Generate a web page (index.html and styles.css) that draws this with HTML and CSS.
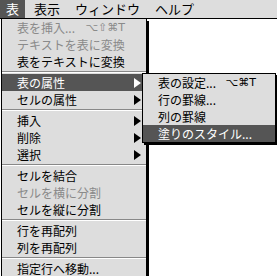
FILE: index.html
```html
<!DOCTYPE html>
<html lang="ja">
<head>
<meta charset="utf-8">
<link rel="stylesheet" href="styles.css">
</head>
<body>
<div class="menubar">
  <span class="title active">表</span>
  <span class="title">表示</span>
  <span class="title">ウィンドウ</span>
  <span class="title">ヘルプ</span>
</div>
<div class="menu main">
  <div class="item disabled"><span class="label">表を挿入...</span><span class="key">⌥⇧⌘T</span></div>
  <div class="item disabled"><span class="label">テキストを表に変換</span></div>
  <div class="item"><span class="label">表をテキストに変換</span></div>
  <div class="sep"></div>
  <div class="item selected has-sub"><span class="label">表の属性</span><svg class="arrow" width="7" height="10" viewBox="0 0 7 10"><polygon points="0,0 7,5 0,10"/></svg>
    <div class="menu sub">
      <div class="item"><span class="label">表の設定...</span><span class="key">⌥⌘T</span></div>
      <div class="item"><span class="label">行の罫線...</span></div>
      <div class="item"><span class="label">列の罫線</span></div>
      <div class="item selected"><span class="label">塗りのスタイル...</span></div>
    </div>
  </div>
  <div class="item"><span class="label">セルの属性</span><svg class="arrow" width="7" height="10" viewBox="0 0 7 10"><polygon points="0,0 7,5 0,10"/></svg></div>
  <div class="sep"></div>
  <div class="item"><span class="label">挿入</span><svg class="arrow" width="7" height="10" viewBox="0 0 7 10"><polygon points="0,0 7,5 0,10"/></svg></div>
  <div class="item"><span class="label">削除</span><svg class="arrow" width="7" height="10" viewBox="0 0 7 10"><polygon points="0,0 7,5 0,10"/></svg></div>
  <div class="item"><span class="label">選択</span><svg class="arrow" width="7" height="10" viewBox="0 0 7 10"><polygon points="0,0 7,5 0,10"/></svg></div>
  <div class="sep"></div>
  <div class="item"><span class="label">セルを結合</span></div>
  <div class="item disabled"><span class="label">セルを横に分割</span></div>
  <div class="item"><span class="label">セルを縦に分割</span></div>
  <div class="sep"></div>
  <div class="item"><span class="label">行を再配列</span></div>
  <div class="item"><span class="label">列を再配列</span></div>
  <div class="sep"></div>
  <div class="item"><span class="label">指定行へ移動...</span></div>
</div>
</body>
</html>
```

FILE: styles.css
```css
html, body {
  margin: 0;
  padding: 0;
  background: #fff;
  width: 277px;
  height: 276px;
  overflow: hidden;
  font-family: "Noto Sans CJK JP", "DejaVu Sans", sans-serif;
  font-size: 12px;
  color: #000;
}

.menubar {
  display: flex;
  height: 18px;
  background: #dddddd;
  border-bottom: 1px solid #000;
  align-items: stretch;
}

.title {
  display: flex;
  align-items: center;
  padding: 0 6px;
  line-height: 18px;
  font-size: 13px;
  margin-right: 3px;
}

.title.active {
  background: #555555;
  color: #fff;
  width: 13px;
}

.menu {
  background: #dddddd;
  border: 1px solid #000;
  box-shadow: 2px 2px 0 #000;
}

.main {
  width: 144px;
  margin-left: 1px;
  border-top: none;
  padding-bottom: 2px;
}

.item {
  position: relative;
  display: flex;
  align-items: center;
  height: 17px;
  padding-left: 15px;
  padding-right: 5px;
  white-space: nowrap;
}

.item .label {
  flex: 1;
}

.item .key {
  font-family: "DejaVu Sans", sans-serif;
  font-size: 11px;
  margin-right: 16px;
}

.item.disabled {
  color: #8a8a8a;
}

.item.selected {
  background: #555555;
  color: #fff;
}

.arrow {
  fill: #000;
}

.item.selected > .arrow {
  fill: #fff;
}

.sep {
  height: 1px;
  background: #888;
  border-bottom: 1px solid #fff;
  margin: 1px 0 1px 0;
}

.sub {
  position: absolute;
  left: 140px;
  top: -1px;
  width: 132px;
  color: #000;
}

.sub .item {
  padding-left: 15px;
}

.sub .key {
  margin-right: 14px;
}
```
